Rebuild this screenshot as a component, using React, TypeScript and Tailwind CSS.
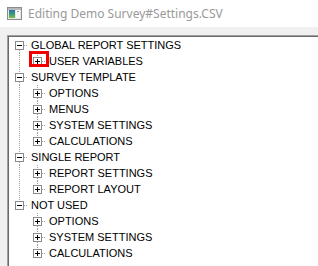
type Node = { label: string; children?: string[] };

const tree: Node[] = [
  { label: "GLOBAL REPORT SETTINGS", children: ["USER VARIABLES"] },
  { label: "SURVEY TEMPLATE", children: ["OPTIONS", "MENUS", "SYSTEM SETTINGS", "CALCULATIONS"] },
  { label: "SINGLE REPORT", children: ["REPORT SETTINGS", "REPORT LAYOUT"] },
  { label: "NOT USED", children: ["OPTIONS", "SYSTEM SETTINGS", "CALCULATIONS"] },
];

const DOT = "#a0a0a0";

// one 18x16 gutter cell of the tree: lines and optional expand box
function Cell({
  up,
  down,
  box,
  across,
}: {
  up?: boolean;
  down?: boolean;
  box?: "plus" | "minus";
  across?: boolean;
}) {
  const top = box ? 4 : 8;
  const bottom = box ? 13 : 8;
  return (
    <svg width="18" height="16" viewBox="0 0 18 16" className="shrink-0" shapeRendering="crispEdges">
      {up && <line x1="9.5" y1="0" x2="9.5" y2={top} stroke={DOT} strokeDasharray="1 1" />}
      {down && <line x1="9.5" y1={bottom} x2="9.5" y2="16" stroke={DOT} strokeDasharray="1 1" />}
      {across && <line x1={box ? 14 : 10} y1="8.5" x2="18" y2="8.5" stroke={DOT} strokeDasharray="1 1" />}
      {box && (
        <>
          <rect x="5.5" y="4.5" width="8" height="8" fill="#fff" stroke="#8a8a8a" />
          <line x1="7" y1="8.5" x2="12" y2="8.5" stroke="#000" />
          {box === "plus" && <line x1="9.5" y1="6" x2="9.5" y2="11" stroke="#000" />}
        </>
      )}
    </svg>
  );
}

function Spacer({ line }: { line: boolean }) {
  return (
    <svg width="18" height="16" viewBox="0 0 18 16" className="shrink-0" shapeRendering="crispEdges">
      {line && <line x1="9.5" y1="0" x2="9.5" y2="16" stroke={DOT} strokeDasharray="1 1" />}
    </svg>
  );
}

function TitleIcon() {
  return (
    <svg width="15" height="13" viewBox="0 0 15 13" shapeRendering="crispEdges">
      <defs>
        <linearGradient id="g" x1="0" y1="0" x2="0" y2="1">
          <stop offset="0" stopColor="#2c6fb4" />
          <stop offset="0.5" stopColor="#3c9a78" />
          <stop offset="1" stopColor="#7cc04a" />
        </linearGradient>
      </defs>
      <rect x="0.5" y="0.5" width="14" height="12" fill="#e8e8e8" stroke="#8c8c8c" />
      <rect x="1" y="1" width="13" height="2" fill="#b8b8b8" />
      <rect x="2" y="3" width="6" height="8" fill="url(#g)" />
      <rect x="9" y="3" width="4" height="8" fill="#f8f8f8" />
      <rect x="10" y="4" width="2" height="1" fill="#9a9a9a" />
    </svg>
  );
}

export default function App() {
  return (
    <div className="w-[318px] h-[266px] overflow-hidden bg-[#f0f0f0] flex flex-col">
      <div className="h-[27px] bg-white flex items-center pl-[7px] gap-[6px] shrink-0">
        <TitleIcon />
        <span className="text-[12px] text-[#999999] font-['Noto_Sans',sans-serif] leading-none">
          Editing Demo Survey#Settings.CSV
        </span>
      </div>
      <div className="h-[8px] shrink-0" />
      <div className="flex-1 ml-[7px] border-l border-t border-[#a0a0a0]">
        <div className="h-full border-l border-t border-[#696969] bg-white pl-[1px] font-['Liberation_Sans',Arial,sans-serif] text-[11px] text-black">
          {tree.map((n, i) => {
            const lastRoot = i === tree.length - 1;
            const kids = n.children ?? [];
            return (
              <div key={n.label}>
                <div className="flex h-4 items-center">
                  <Cell box="minus" up={i > 0} down={!lastRoot} across />
                  <span className="pl-[3px] leading-4 whitespace-nowrap">{n.label}</span>
                </div>
                {kids.map((k, j) => (
                  <div key={k} className="relative flex h-4 items-center">
                    <Spacer line={!lastRoot} />
                    <Cell box="plus" up down={j < kids.length - 1} across />
                    <span className="pl-[3px] leading-4 whitespace-nowrap">{k}</span>
                    {i === 0 && j === 0 && (
                      <div className="absolute left-[19px] top-[-2px] w-[20px] h-[16px] border-[3px] border-[#f00000]" />
                    )}
                  </div>
                ))}
              </div>
            );
          })}
        </div>
      </div>
    </div>
  );
}
